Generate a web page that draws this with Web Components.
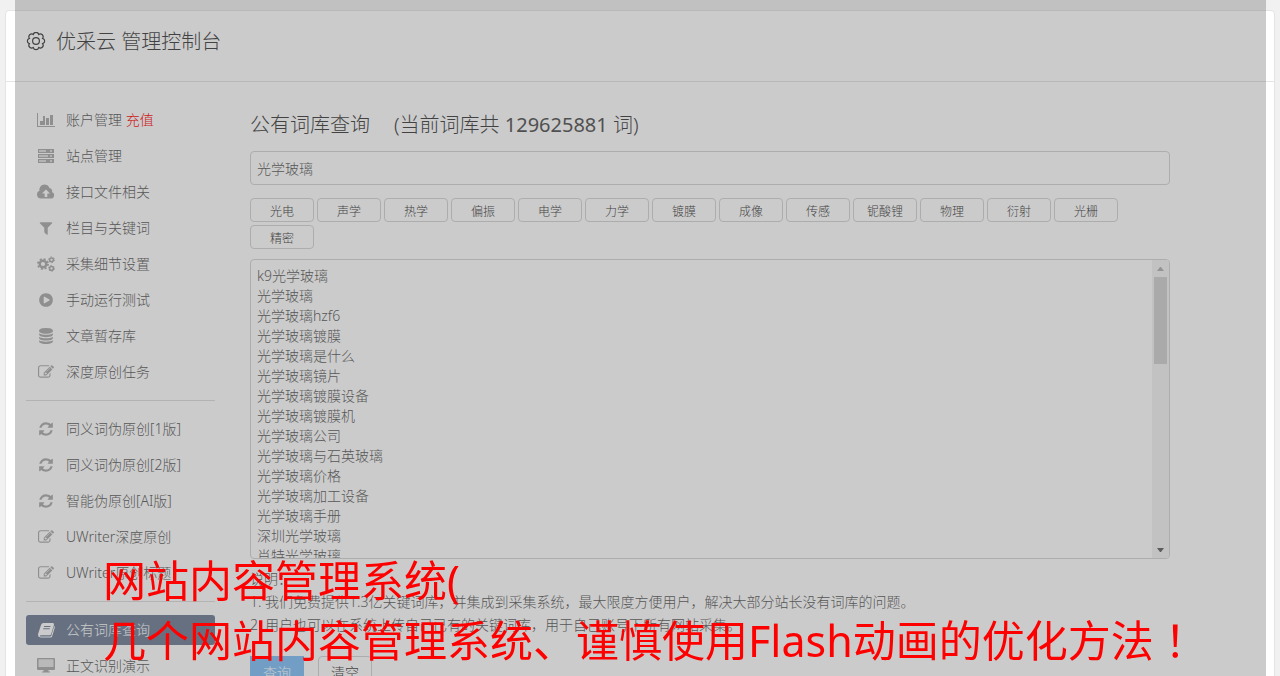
<!DOCTYPE html>
<html lang="zh-CN">
<head>
<meta charset="utf-8">
<title>优采云 管理控制台</title>
<style>
  body {
    margin: 0;
    background: #f1f1f1;
    color: #595959;
    font: 300 14px/20px "Noto Sans", "Noto Sans CJK SC", sans-serif;
  }

  .hot {
    color: #f00;
  }

  .mark {
    font-family: "Noto Sans CJK TC", sans-serif;
    line-height: 1;
  }
</style>
</head>
<body>
<console-page>
  <side-nav slot="nav">
    <nav-item icon="chart">账户管理 <span class="hot">充值</span></nav-item>
    <nav-item icon="server">站点管理</nav-item>
    <nav-item icon="cloud">接口文件相关</nav-item>
    <nav-item icon="filter">栏目与关键词</nav-item>
    <nav-item icon="cogs">采集细节设置</nav-item>
    <nav-item icon="play">手动运行测试</nav-item>
    <nav-item icon="database">文章暂存库</nav-item>
    <nav-item icon="edit">深度原创任务</nav-item>
    <nav-divider></nav-divider>
    <nav-item icon="refresh">同义词伪原创[1版]</nav-item>
    <nav-item icon="refresh">同义词伪原创[2版]</nav-item>
    <nav-item icon="refresh">智能伪原创[AI版]</nav-item>
    <nav-item icon="edit">UWriter深度原创</nav-item>
    <nav-item icon="edit">UWriter原创标题</nav-item>
    <nav-divider></nav-divider>
    <nav-item icon="book" active>公有词库查询</nav-item>
    <nav-item icon="desktop">正文识别演示</nav-item>
  </side-nav>
  <word-query></word-query>
</console-page>
<page-caption>网站内容管理系统(<br>几个网站内容管理系统、谨慎使用Flash动画的优化方法<span class="mark" lang="zh-TW">！</span></page-caption>

<script>
const ICONS = {
  chart: `<path d="M1 1h1v13h17v1H1zM4 9h3v4H4zM7 4h2v9H7zM10 6h3v7h-3zM14 3h3v10h-3z"/>`,
  server: `<path fill-rule="evenodd" d="M2 1h16v4H2zm1 1v2h7V2zm11 0v2h2V2zM2 6h16v4H2zm1 1v2h9V7zm11 0v2h2V7zM2 11h16v4H2zm1 1v2h7v-2zm11 0v2h2v-2z"/><path opacity=".4" d="M2 1h16v4H2zM2 6h16v4H2zM2 11h16v4H2z"/>`,
  cloud: `<path fill-rule="evenodd" d="M5 14.500a4 4 0 0 1-1.500-7.700A5.200 5.200 0 0 1 13.500 4a3 3 0 0 1 2.500 4 3.400 3.400 0 0 1-.500 6.500zM10 5.500l-4 4h2.700V13h2.600V9.500H14z"/>`,
  cogs: `<g fill="none" stroke="currentColor"><circle cx="7" cy="8" r="3.300" stroke-width="2.400"/><circle cx="7" cy="8" r="5" stroke-width="1.800" stroke-dasharray="2 1.930"/><circle cx="15.500" cy="3.800" r="1.900" stroke-width="1.500"/><circle cx="15.500" cy="3.800" r="2.900" stroke-dasharray="1.500 1.530"/><circle cx="15.500" cy="12.400" r="1.900" stroke-width="1.500"/><circle cx="15.500" cy="12.400" r="2.900" stroke-dasharray="1.500 1.530"/></g>`,
  book: `<path fill-rule="evenodd" d="M7.600 1h9.200q1.600.200 1.200 1.800L15.200 12q-.400 1.200-1.500 1.200H5q-1.200 0-1.200.700 0 .600 1 .600h9.400q.800 0 1.100-.800L18.200 4q.900.300.600 1.400l-2.600 8.800q-.400 1.300-1.700 1.300H4.600Q2 15.300 2 13q0-1 .400-2L5 2.900Q5.600 1 7.600 1zm.500 3-.300 1h6.500l.300-1zM7.400 6.300l-.300 1h6.500l.300-1z"/>`,
  desktop: `<path fill-rule="evenodd" d="M2 0h16q1 0 1 1v10q0 1-1 1h-5.500v1.500H14v1H6v-1h1.500V12H2q-1 0-1-1V1q0-1 1-1zm.500 1.300V9h15V1.300z"/><path opacity=".3" d="M2 1h16v8H2z"/>`
};

// these are drawn on the 1792 unit grid
const GRID_ICONS = {
  filter: "M1595 295q17 41-14 70l-493 493v742q0 42-39 59-13 5-25 5-27 0-45-19l-256-256q-19-19-19-45v-486l-493-493q-31-29-14-70 17-39 59-39h1280q42 0 59 39z",
  play: "M896 128q209 0 385.5 103t279.500 279.500 103 385.500-103 385.500-279.500 279.500-385.500 103-385.500-103-279.500-279.500-103-385.500 103-385.500 279.500-279.500 385.500-103zm384 823q32-18 32-55t-32-55l-544-320q-31-19-64-1-32 19-32 56v640q0 37 32 56 16 8 32 8 17 0 32-9z",
  database: "M896 768q237 0 443-43t325-127v170q0 69-103 128t-280 93.500-385 34.500-385-34.500-280-93.500-103-128v-170q119 84 325 127t443 43zm0 768q237 0 443-43t325-127v170q0 69-103 128t-280 93.500-385 34.500-385-34.500-280-93.500-103-128v-170q119 84 325 127t443 43zm0-384q237 0 443-43t325-127v170q0 69-103 128t-280 93.500-385 34.500-385-34.500-280-93.500-103-128v-170q119 84 325 127t443 43zm0-1152q208 0 385 34.500t280 93.500 103 128v128q0 69-103 128t-280 93.500-385 34.500-385-34.500-280-93.500-103-128v-128q0-69 103-128t280-93.500 385-34.500z",
  edit: "M888 1184l116-116-152-152-116 116v56h96v96h56zm440-720q-16-16-33 1l-350 350q-17 17-1 33t33-1l350-350q17-17 1-33zm80 594v190q0 119-84.500 203.500t-203.500 84.500h-832q-119 0-203.500-84.500t-84.500-203.500v-832q0-119 84.500-203.500t203.500-84.500h832q63 0 117 25 15 7 18 23 3 17-9 29l-49 49q-14 14-32 8-23-6-45-6h-832q-66 0-113 47t-47 113v832q0 66 47 113t113 47h832q66 0 113-47t47-113v-126q0-13 9-22l64-64q15-15 35-7t20 29zm-96-738l288 288-672 672h-288v-288zm444 132l-92 92-288-288 92-92q28-28 68-28t68 28l152 152q28 28 28 68t-28 68z",
  refresh: "M1639 1056q0 5-1 7-64 268-268 434.500t-478 166.500q-146 0-282.500-55t-243.500-157l-129 129q-19 19-45 19t-45-19-19-45v-448q0-26 19-45t45-19h448q26 0 45 19t19 45-19 45l-137 137q71 66 161 102t187 36q134 0 250-65t186-179q11-17 53-117 8-23 30-23h192q13 0 22.500 9.500t9.500 22.500zm25-800v448q0 26-19 45t-45 19h-448q-26 0-45-19t-19-45 19-45l138-138q-148-137-349-137-134 0-250 65t-186 179q-11 17-53 117-8 23-30 23h-199q-13 0-22.500-9.500t-9.500-22.500v-7q65-268 270-434.500t480-166.500q146 0 284 55.500t245 156.500l130-129q19-19 45-19t45 19 19 45z"
};

function iconSvg(name) {
  if (GRID_ICONS[name]) {
    return `<svg width="16" height="16" viewBox="0 0 1792 1792" fill="currentColor" aria-hidden="true"><path d="${GRID_ICONS[name]}"/></svg>`;
  }
  return `<svg width="20" height="16" viewBox="0 0 20 16" fill="currentColor" aria-hidden="true">${ICONS[name]}</svg>`;
}

customElements.define(
  "console-page",
  class ConsolePage extends HTMLElement {
    constructor() {
      super();
      this.attachShadow({mode: "open"});
    }

    connectedCallback() {
      this.shadowRoot.innerHTML = `
      <style>
        :host {
          display: block;
          padding: 10px 5px 0;
        }

        .card {
          background: #fff;
          border: 1px solid #e4e4e4;
          border-radius: 4px;
        }

        header {
          display: flex;
          align-items: center;
          gap: 10px;
          padding: 13px 20px 21px;
          border-bottom: 1px solid #e4e4e4;
          color: #3c3c3c;
        }

        h1 {
          margin: 0;
          font-size: 20px;
          line-height: 36px;
          font-weight: 300;
        }

        .body {
          display: flex;
          gap: 35px;
          padding: 23px 104px 23px 20px;
        }
      </style>

      <div class="card">
        <header>
          <svg width="20" height="20" viewBox="-10 -9 20 20" fill="none" stroke="currentColor" stroke-width="1.2" aria-hidden="true">
            <path d="M6.600 2.700A2.800 2.800 0 0 1 2.700 6.600A2.800 2.800 0 0 1-2.700 6.600A2.800 2.800 0 0 1-6.600 2.700A2.800 2.800 0 0 1-6.600-2.700A2.800 2.800 0 0 1-2.700-6.600A2.800 2.800 0 0 1 2.700-6.600A2.800 2.800 0 0 1 6.600-2.700A2.800 2.800 0 0 1 6.600 2.700Z"/>
            <circle r="3.400"/>
          </svg>
          <h1>优采云 管理控制台</h1>
        </header>
        <div class="body">
          <slot name="nav"></slot>
          <slot></slot>
        </div>
      </div>
      `;
    }
  }
);

customElements.define(
  "side-nav",
  class SideNav extends HTMLElement {
    constructor() {
      super();
      this.attachShadow({mode: "open"});
    }

    connectedCallback() {
      this.shadowRoot.innerHTML = `
      <style>
        :host {
          display: block;
          flex: none;
          width: 189px;
        }

        nav {
          display: flex;
          flex-direction: column;
          gap: 6px;
        }
      </style>
      <nav><slot></slot></nav>
      `;
    }
  }
);

customElements.define(
  "nav-divider",
  class NavDivider extends HTMLElement {
    constructor() {
      super();
      this.attachShadow({mode: "open"});
    }

    connectedCallback() {
      this.shadowRoot.innerHTML = `
      <style>
        :host {
          display: block;
          margin: 7px 0;
          border-top: 1px solid #ddd;
        }
      </style>
      `;
    }
  }
);

customElements.define(
  "nav-item",
  class NavItem extends HTMLElement {
    constructor() {
      super();
      this.attachShadow({mode: "open"});
    }

    connectedCallback() {
      this.shadowRoot.innerHTML = `
      <style>
        :host {
          display: block;
        }

        a {
          display: flex;
          align-items: center;
          height: 30px;
          border-radius: 3px;
          color: inherit;
          text-decoration: none;
          white-space: pre;
        }

        .icon {
          display: flex;
          justify-content: center;
          width: 40px;
          color: #aaa;
        }

        :host([active]) a {
          background: #6f7d95;
          color: #fff;
        }

        :host([active]) .icon {
          color: #fff;
        }
      </style>
      <a href="#"><span class="icon">${iconSvg(this.getAttribute("icon"))}</span><span><slot></slot></span></a>
      `;
    }
  }
);

customElements.define(
  "word-list",
  class WordList extends HTMLElement {
    constructor() {
      super();
      this.attachShadow({mode: "open"});
    }

    connectedCallback() {
      this.shadowRoot.innerHTML = `
      <style>
        :host {
          display: flex;
          height: 298px;
          border: 1px solid #d5d5d5;
          border-radius: 4px;
          overflow: hidden;
        }

        textarea {
          flex: 1;
          min-width: 0;
          padding: 6px;
          border: 0;
          outline: 0;
          resize: none;
          background: none;
          color: inherit;
          font: inherit;
          scrollbar-width: none;
        }

        .bar {
          display: flex;
          flex-direction: column;
          width: 17px;
          background: #f3f3f3;
        }

        button {
          display: flex;
          align-items: center;
          justify-content: center;
          height: 17px;
          padding: 0;
          border: 0;
          background: none;
          color: #b0b0b0;
        }

        .down {
          color: #606060;
        }

        .track {
          flex: 1;
          padding: 0 2px;
        }

        .thumb {
          height: 33%;
          background: #d0d0d0;
        }
      </style>

      <textarea aria-label="词库结果"></textarea>
      <div class="bar">
        <button class="up" aria-label="向上"><svg width="7" height="4"><path fill="currentColor" d="M0 4h7L4 0H3z"/></svg></button>
        <div class="track"><div class="thumb"></div></div>
        <button class="down" aria-label="向下"><svg width="7" height="4"><path fill="currentColor" d="M0 0h7L4 4H3z"/></svg></button>
      </div>
      `;

      const area = this.shadowRoot.querySelector("textarea");
      const track = this.shadowRoot.querySelector(".track");
      const thumb = this.shadowRoot.querySelector(".thumb");
      area.value = this.textContent.trim();

      area.addEventListener("scroll", () => {
        const range = area.scrollHeight - area.clientHeight;
        const room = track.clientHeight - thumb.offsetHeight;
        thumb.style.transform = `translateY(${range ? area.scrollTop / range * room : 0}px)`;
      });
      this.shadowRoot.querySelector(".up").addEventListener("click", () => area.scrollBy(0, -40));
      this.shadowRoot.querySelector(".down").addEventListener("click", () => area.scrollBy(0, 40));
    }
  }
);

const TAGS = ["光电", "声学", "热学", "偏振", "电学", "力学", "镀膜", "成像", "传感", "铌酸锂", "物理", "衍射", "光栅", "精密"];

const WORDS = [
  "k9光学玻璃",
  "光学玻璃",
  "光学玻璃hzf6",
  "光学玻璃镀膜",
  "光学玻璃是什么",
  "光学玻璃镜片",
  "光学玻璃镀膜设备",
  "光学玻璃镀膜机",
  "光学玻璃公司",
  "光学玻璃与石英玻璃",
  "光学玻璃价格",
  "光学玻璃加工设备",
  "光学玻璃手册",
  "深圳光学玻璃",
  "肖特光学玻璃"
];

customElements.define(
  "word-query",
  class WordQuery extends HTMLElement {
    constructor() {
      super();
      this.attachShadow({mode: "open"});
    }

    connectedCallback() {
      this.shadowRoot.innerHTML = `
      <style>
        :host {
          display: block;
          flex: 1;
          min-width: 0;
          padding-top: 5px;
        }

        h2 {
          display: flex;
          gap: 24px;
          margin: 0 0 11px;
          color: #3c3c3c;
          font-size: 20px;
          line-height: 30px;
          font-weight: 300;
        }

        .count {
          color: #505050;
          font-weight: 400;
        }

        input {
          display: block;
          box-sizing: border-box;
          width: 100%;
          height: 34px;
          padding: 0 6px;
          border: 1px solid #d5d5d5;
          border-radius: 4px;
          background: none;
          color: inherit;
          font: inherit;
        }

        .tags {
          display: flex;
          flex-wrap: wrap;
          gap: 3px;
          margin: 13px 0 10px;
        }

        .tags button {
          width: 64px;
          height: 24px;
          padding: 3px 0 0;
          border: 1px solid #d5d5d5;
          border-radius: 4px;
          background: none;
          color: #3c3c3c;
          font: inherit;
          font-size: 12px;
        }

        .notes {
          margin-top: 8px;
          line-height: 23px;
        }

        .notes p {
          margin: 0;
        }

        .actions {
          display: flex;
          gap: 14px;
          margin-top: 20px;
        }

        .actions button {
          width: 54px;
          height: 34px;
          padding: 0;
          border: 1px solid #d5d5d5;
          border-radius: 4px;
          background: none;
          color: #3c3c3c;
          font: inherit;
        }

        .actions .primary {
          border: 0;
          border-radius: 0;
          background: #80bff8;
          color: #fff;
        }
      </style>

      <h2><span>公有词库查询</span><span>(当前词库共 <span class="count">129625881</span> 词)</span></h2>
      <input type="text" value="光学玻璃" aria-label="关键词">
      <div class="tags">${TAGS.map((tag) => `<button>${tag}</button>`).join("")}</div>
      <word-list>${WORDS.join("\n")}</word-list>
      <div class="notes">
        <p>说明：</p>
        <p>1. 我们免费提供1.3亿关键词库，并集成到采集系统，最大限度方便用户，解决大部分站长没有词库的问题。</p>
        <p>2. 用户也可以在系统上传自己已有的关键词库，用于自己账号下所有网站采集。</p>
      </div>
      <div class="actions">
        <button class="primary">查询</button>
        <button class="clear">清空</button>
      </div>
      `;

      const input = this.shadowRoot.querySelector("input");
      this.shadowRoot.querySelectorAll(".tags button").forEach((button) => {
        button.addEventListener("click", () => {
          input.value = button.textContent;
        });
      });
      this.shadowRoot.querySelector(".clear").addEventListener("click", () => {
        input.value = "";
      });
    }
  }
);

customElements.define(
  "page-caption",
  class PageCaption extends HTMLElement {
    constructor() {
      super();
      this.attachShadow({mode: "open"});
    }

    connectedCallback() {
      this.shadowRoot.innerHTML = `
      <style>
        :host {
          position: fixed;
          inset: 0 14px 0 15px;
          display: flex;
          align-items: flex-end;
          background: rgba(82, 82, 82, 0.3);
          pointer-events: none;
        }

        p {
          margin: 0;
          padding: 0 0 5px 88px;
          color: #f00;
          font-size: 43px;
          line-height: 60px;
          font-weight: 400;
          white-space: nowrap;
        }
      </style>
      <p><slot></slot></p>
      `;
    }
  }
);
</script>
</body>
</html>
